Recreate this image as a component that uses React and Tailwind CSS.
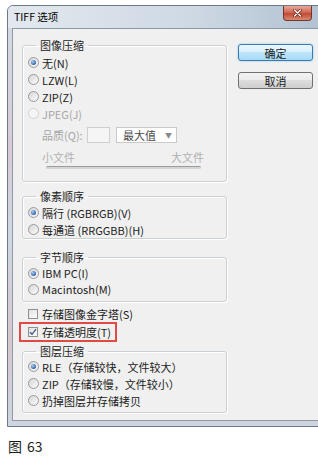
import React from 'react'

// Win7-style radio and checkbox bits

function Radio({ checked, disabled }) {
  if (disabled) {
    return <span className="w-[11px] h-[11px] shrink-0 rounded-full border border-[#d2d2d2] bg-[#f6f6f6]" />
  }
  return (
    <span className="w-[11px] h-[11px] shrink-0 rounded-full border border-[#9a9a9a] bg-[linear-gradient(135deg,#d6d6d6,#fbfbfb)] flex items-center justify-center">
      {checked && (
        <span className="w-[5px] h-[5px] rounded-full bg-[radial-gradient(circle_at_35%_35%,#a9cdf5,#2b5ea9_75%)]" />
      )}
    </span>
  )
}

function Check({ checked }) {
  return (
    <span className="w-[10px] h-[10px] shrink-0 border border-[#8e8f8f] bg-[linear-gradient(135deg,#e0e0e0,#fdfdfd)] flex items-center justify-center">
      {checked && (
        <svg width="8" height="8" viewBox="0 0 8 8">
          <path d="M1 4.2 L3 6.3 L7 1.2" fill="none" stroke="#3e558a" strokeWidth="1.3" />
        </svg>
      )}
    </span>
  )
}

function Option({ label, checked, disabled, h = 'h-[17px]' }) {
  return (
    <div className={`${h} flex items-center pl-[5px] gap-[3px]`}>
      <Radio checked={checked} disabled={disabled} />
      <span className={disabled ? 'text-[#a6a6a6]' : 'text-[#1c1c1c]'}>{label}</span>
    </div>
  )
}

function Group({ title, className, children }) {
  return (
    <fieldset className={`border border-[#c9d1d6] rounded-[3px] shadow-[inset_1px_1px_0_#fff,1px_1px_0_#fff] ${className}`}>
      <legend className="ml-[13px] px-[4px] h-[14px] leading-[14px] text-[#1c1c1c]">{title}</legend>
      {children}
    </fieldset>
  )
}

export default function App() {
  return (
    <div className="w-[318px] h-[457px] bg-white overflow-hidden font-['Noto_Sans_CJK_SC',sans-serif] text-[11px] leading-[14px]">
      {/* dialog window */}
      <div className="ml-[7px] mt-[5px] w-[330px] h-[422px] rounded-t-[6px] border border-[#6b7989] bg-[linear-gradient(180deg,#d3dce6,#d9cbd3_35%,#cfd8e2_55%,#d8c6cd_80%,#cdd6e0)] flex flex-col">
        <div className="h-[22px] flex bg-[linear-gradient(90deg,#e2e8ee,#cfd9e4_55%,#aebfd0)] rounded-t-[5px]">
          <span className="pl-[6px] self-center text-[10.5px] text-black">TIFF 选项</span>
          <div className="ml-auto mr-[24px] w-[29px] h-[15px] rounded-b-[4px] border border-t-0 border-[#7a3328] bg-[linear-gradient(180deg,#e9a99a,#cf6a55_45%,#c04a36_55%,#d98a72)] flex items-center justify-center">
            <svg width="9" height="8" viewBox="0 0 9 8">
              <path d="M1.5 1 L7.5 7 M7.5 1 L1.5 7" stroke="#5a1f16" strokeWidth="2.6" strokeLinecap="round" />
              <path d="M1.5 1 L7.5 7 M7.5 1 L1.5 7" stroke="#fff" strokeWidth="1.4" strokeLinecap="round" />
            </svg>
          </div>
        </div>

        {/* client area */}
        <div className="ml-[4px] h-[393px] bg-[#f0f0f0] border border-r-0 border-[#8d99a6] flex">
          <div className="w-[214px] pl-[9px] pt-[9px] flex flex-col">
            <Group title="图像压缩" className="w-[205px] pt-[2px] pb-[12px]">
              <Option label="无(N)" checked />
              <Option label="LZW(L)" />
              <Option label="ZIP(Z)" />
              <Option label="JPEG(J)" disabled />
              <div className="mt-[5px] h-[16px] flex items-center pl-[19px]">
                <span className="text-[#a6a6a6] w-[45px]">品质(Q):</span>
                <span className="w-[23px] h-[16px] border border-[#cfcfcf] bg-[#f5f5f5]" />
                <span className="ml-[6px] w-[61px] h-[16px] border border-[#c9c9c9] bg-white flex items-center pl-[6px] text-[#4a4a4a]">
                  最大值
                  <span className="ml-auto mr-[4px] text-[7px] text-[#8a8a8a]">▼</span>
                </span>
              </div>
              <div className="mt-[7px] h-[14px] flex pl-[19px] pr-[22px] justify-between text-[#b0b0b0]">
                <span>小文件</span>
                <span>大文件</span>
              </div>
              <div className="mt-[2px] ml-[23px] w-[155px] h-[3px] rounded-full border-t border-[#9c9c9c] bg-[#d4d4d4]" />
            </Group>

            <Group title="像素顺序" className="w-[205px] mt-[7px] pt-[1px]">
              <Option label="隔行 (RGBRGB)(V)" checked />
              <Option label="每通道 (RRGGBB)(H)" />
            </Group>

            <Group title="字节顺序" className="w-[205px] mt-[11px] pt-[1px] pb-[4px]">
              <Option label="IBM PC(I)" checked h="h-[16px]" />
              <Option label="Macintosh(M)" h="h-[16px]" />
            </Group>

            <div className="mt-[4px] h-[16px] flex items-center pl-[6px] gap-[4px]">
              <Check />
              <span className="text-[#1c1c1c]">存储图像金字塔(S)</span>
            </div>
            <div className="ml-[-3px] w-[98px] h-[20px] border-2 border-[#e04a42] flex items-center pl-[7px] gap-[4px]">
              <Check checked />
              <span className="text-[#1c1c1c]">存储透明度(T)</span>
            </div>

            <Group title="图层压缩" className="w-[205px] mt-[2px] pb-[3px]">
              <Option label="RLE（存储较快，文件较大）" checked />
              <Option label="ZIP（存储较慢，文件较小）" />
              <Option label="扔掉图层并存储拷贝" />
            </Group>
          </div>

          {/* buttons */}
          <div className="ml-[11px] pt-[15px] flex flex-col">
            <button className="w-[75px] h-[17px] rounded-[3px] border border-[#3d7bad] bg-[linear-gradient(180deg,#eaf6fd,#d9f0fc_45%,#bee6fd_50%,#a7d9f5)] shadow-[0_0_2px_#6fc1ef] text-[11px] leading-[14px] text-[#1c1c1c]">
              确定
            </button>
            <button className="mt-[11px] w-[75px] h-[17px] rounded-[3px] border border-[#707070] bg-[linear-gradient(180deg,#f2f2f2,#ebebeb_45%,#dddddd_50%,#cfcfcf)] text-[11px] leading-[14px] text-[#1c1c1c]">
              取消
            </button>
          </div>
        </div>
      </div>

      <div className="mt-[10px] pl-[8px] h-[18px] flex items-center gap-[5px] text-[14px] text-[#1a1a1a]">
        <span>图</span>
        <span>63</span>
      </div>
    </div>
  )
}
